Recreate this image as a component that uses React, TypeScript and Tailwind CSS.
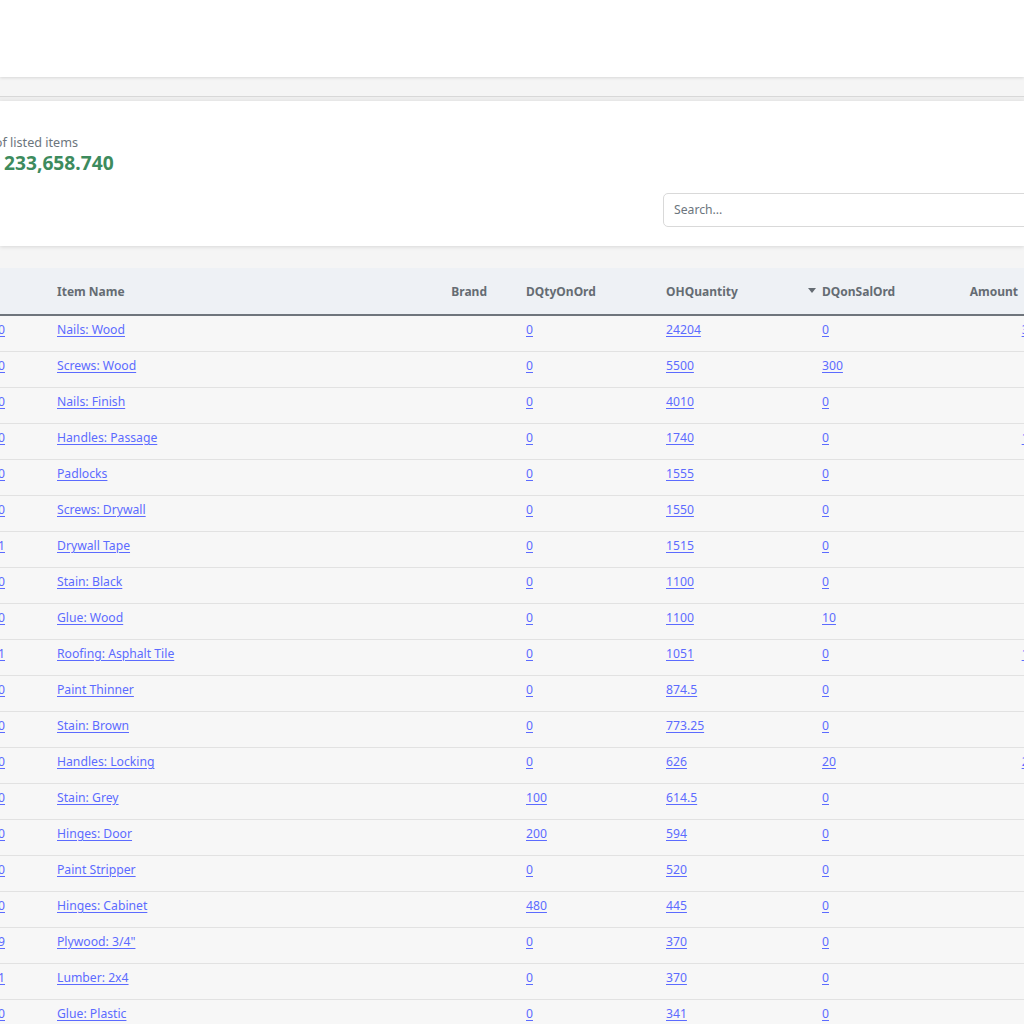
import React from "react";

type Row = {
  code: string;
  name: string;
  q1: string;
  q2: string;
  q3: string;
  amt: string;
};

const rows: Row[] = [
  { code: "1000", name: "Nails: Wood", q1: "0", q2: "24204", q3: "0", amt: "3,630.60" },
  { code: "1000", name: "Screws: Wood", q1: "0", q2: "5500", q3: "300", amt: "825" },
  { code: "1000", name: "Nails: Finish", q1: "0", q2: "4010", q3: "0", amt: "601.5" },
  { code: "1000", name: "Handles: Passage", q1: "0", q2: "1740", q3: "0", amt: "1,740.00" },
  { code: "1000", name: "Padlocks", q1: "0", q2: "1555", q3: "0", amt: "777.5" },
  { code: "1000", name: "Screws: Drywall", q1: "0", q2: "1550", q3: "0", amt: "232.5" },
  { code: "1001", name: "Drywall Tape", q1: "0", q2: "1515", q3: "0", amt: "454.5" },
  { code: "1000", name: "Stain: Black", q1: "0", q2: "1100", q3: "0", amt: "990" },
  { code: "1000", name: "Glue: Wood", q1: "0", q2: "1100", q3: "10", amt: "550" },
  { code: "1011", name: "Roofing: Asphalt Tile", q1: "0", q2: "1051", q3: "0", amt: "1,261.20" },
  { code: "1000", name: "Paint Thinner", q1: "0", q2: "874.5", q3: "0", amt: "874.5" },
  { code: "1000", name: "Stain: Brown", q1: "0", q2: "773.25", q3: "0", amt: "695.93" },
  { code: "1000", name: "Handles: Locking", q1: "0", q2: "626", q3: "20", amt: "2,504.00" },
  { code: "1000", name: "Stain: Grey", q1: "100", q2: "614.5", q3: "0", amt: "553.05" },
  { code: "1000", name: "Hinges: Door", q1: "200", q2: "594", q3: "0", amt: "297" },
  { code: "1000", name: "Paint Stripper", q1: "0", q2: "520", q3: "0", amt: "780" },
  { code: "1000", name: "Hinges: Cabinet", q1: "480", q2: "445", q3: "0", amt: "222.5" },
  { code: "1009", name: 'Plywood: 3/4"', q1: "0", q2: "370", q3: "0", amt: "925" },
  { code: "1021", name: "Lumber: 2x4", q1: "0", q2: "370", q3: "0", amt: "555" },
  { code: "1000", name: "Glue: Plastic", q1: "0", q2: "341", q3: "0", amt: "341" },
];

const link = "text-[#5c6bff] underline underline-offset-[2px] decoration-[1px]";

export default function App() {
  return (
    <div
      className="w-[1024px] h-[1024px] overflow-hidden bg-[#f5f5f5] text-[12.2px]"
      style={{ fontFamily: '"Noto Sans", "Open Sans", sans-serif' }}
    >
      {/* top header */}
      <div className="h-[77px] bg-white shadow-[0_1px_3px_rgba(0,0,0,0.12)] relative z-10" />
      <div className="h-[19px]" />
      <div className="h-[5px] border-t border-[#d8d8d8] bg-[#eeeeee]" />

      {/* summary card */}
      <div className="h-[145px] bg-white shadow-[0_1px_4px_rgba(0,0,0,0.12)] flex flex-col relative z-10">
        <div className="pt-[33px] flex">
          <div className="w-[78px] flex justify-end whitespace-nowrap leading-[18px] text-[#6c757d] text-[12.6px]">
            Total value of listed items
          </div>
        </div>
        <div className="pl-[4px] leading-[22px] text-[19.2px] font-bold text-[#3d8b5d] whitespace-nowrap">
          233,658.740
        </div>
        <div className="flex mt-[19px]">
          <div className="w-[663px] shrink-0" />
          <div className="w-[400px] shrink-0 h-[34px] rounded-[5px] border border-[#d9d9d9] bg-white flex items-center pl-[10px] text-[#6c757d] text-[12.2px]">
            Search...
          </div>
        </div>
      </div>

      <div className="h-[22px]" />

      {/* table */}
      <div className="w-[1100px]">
        <div className="h-[48px] bg-[#eef1f5] border-b-2 border-[#6f757c] flex pt-[14px] leading-[20px] font-bold text-[12px] text-[#656c73] whitespace-nowrap">
          <div className="w-[57px] shrink-0" />
          <div className="w-[360px] shrink-0">Item Name</div>
          <div className="w-[70px] shrink-0 flex justify-end">Brand</div>
          <div className="w-[39px] shrink-0" />
          <div className="w-[140px] shrink-0">DQtyOnOrd</div>
          <div className="w-[142px] shrink-0">OHQuantity</div>
          <div className="w-[14px] shrink-0 flex items-start pt-[6px]">
            <svg width="8" height="5" viewBox="0 0 8 5">
              <path d="M0 0 L8 0 L4 5 Z" fill="#656c73" />
            </svg>
          </div>
          <div className="w-[100px] shrink-0">DQonSalOrd</div>
          <div className="w-[96px] shrink-0 flex justify-end">Amount</div>
        </div>

        {rows.map((r, i) => (
          <div
            key={i}
            className="h-[36px] bg-[#f7f7f7] border-b border-[#e2e2e2] flex pt-[4px] leading-[20px] whitespace-nowrap"
          >
            <div className="w-[57px] shrink-0 flex">
              <div className="w-[5px] flex justify-end">
                <span className={link}>{r.code}</span>
              </div>
            </div>
            <div className="w-[469px] shrink-0">
              <span className={link}>{r.name}</span>
            </div>
            <div className="w-[140px] shrink-0">
              <span className={link}>{r.q1}</span>
            </div>
            <div className="w-[156px] shrink-0">
              <span className={link}>{r.q2}</span>
            </div>
            <div className="w-[150px] shrink-0">
              <span className={link}>{r.q3}</span>
            </div>
            <div className="w-[98px] shrink-0 flex justify-end">
              <span className={link}>{r.amt}</span>
            </div>
          </div>
        ))}
      </div>
    </div>
  );
}
